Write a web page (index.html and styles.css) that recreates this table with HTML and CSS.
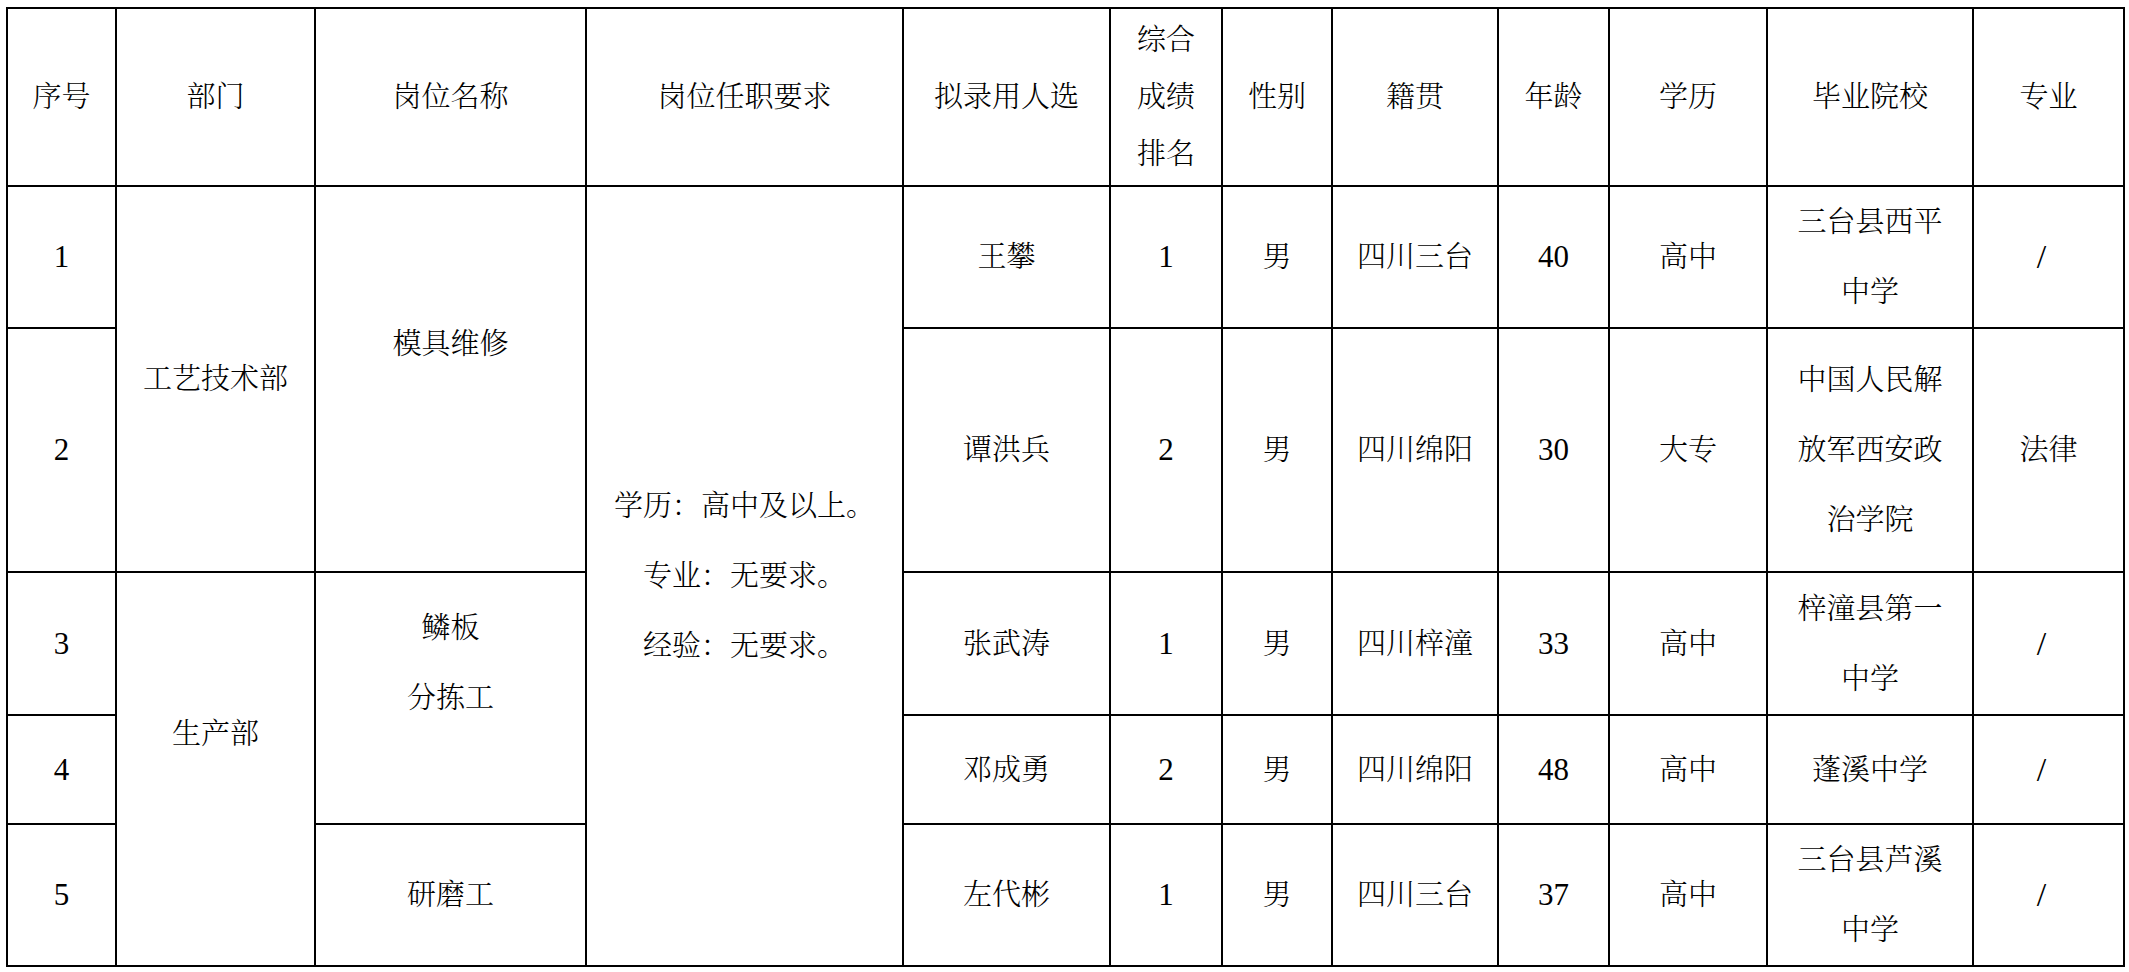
FILE: index.html
```html
<!DOCTYPE html>
<html lang="zh-CN">
<head>
<meta charset="utf-8">
<title>拟录用人员名单</title>
<link rel="stylesheet" href="styles.css">
</head>
<body>
<table class="roster">
  <colgroup>
    <col class="c1"><col class="c2"><col class="c3"><col class="c4"><col class="c5"><col class="c6">
    <col class="c7"><col class="c8"><col class="c9"><col class="c10"><col class="c11"><col class="c12">
  </colgroup>
  <tr class="r-head">
    <th>序号</th>
    <th>部门</th>
    <th>岗位名称</th>
    <th>岗位任职要求</th>
    <th>拟录用人选</th>
    <th class="stack"><div>综合</div><div>成绩</div><div>排名</div></th>
    <th>性别</th>
    <th>籍贯</th>
    <th>年龄</th>
    <th>学历</th>
    <th>毕业院校</th>
    <th>专业</th>
  </tr>
  <tr class="r1">
    <td class="num">1</td>
    <td rowspan="2">工艺技术部</td>
    <td rowspan="2"><p>模具维修</p><p class="blank"></p></td>
    <td rowspan="5"><p>学历：高中及以上。</p><p>专业：无要求。</p><p>经验：无要求。</p></td>
    <td>王攀</td>
    <td class="num">1</td>
    <td>男</td>
    <td>四川三台</td>
    <td class="num">40</td>
    <td>高中</td>
    <td><p>三台县西平</p><p>中学</p></td>
    <td class="slash">/</td>
  </tr>
  <tr class="r2">
    <td class="num">2</td>
    <td>谭洪兵</td>
    <td class="num">2</td>
    <td>男</td>
    <td>四川绵阳</td>
    <td class="num">30</td>
    <td>大专</td>
    <td><p>中国人民解</p><p>放军西安政</p><p>治学院</p></td>
    <td>法律</td>
  </tr>
  <tr class="r3">
    <td class="num">3</td>
    <td rowspan="3"><p>生产部</p><p class="blank"></p></td>
    <td rowspan="2"><p>鳞板</p><p>分拣工</p><p class="blank"></p></td>
    <td>张武涛</td>
    <td class="num">1</td>
    <td>男</td>
    <td>四川梓潼</td>
    <td class="num">33</td>
    <td>高中</td>
    <td><p>梓潼县第一</p><p>中学</p></td>
    <td class="slash">/</td>
  </tr>
  <tr class="r4">
    <td class="num">4</td>
    <td>邓成勇</td>
    <td class="num">2</td>
    <td>男</td>
    <td>四川绵阳</td>
    <td class="num">48</td>
    <td>高中</td>
    <td>蓬溪中学</td>
    <td class="slash">/</td>
  </tr>
  <tr class="r5">
    <td class="num">5</td>
    <td>研磨工</td>
    <td>左代彬</td>
    <td class="num">1</td>
    <td>男</td>
    <td>四川三台</td>
    <td class="num">37</td>
    <td>高中</td>
    <td><p>三台县芦溪</p><p>中学</p></td>
    <td class="slash">/</td>
  </tr>
</table>
</body>
</html>
```

FILE: styles.css
```css
html, body {
  background: #ffffff;
}
body {
  margin: 7px 0 0 6px;
  font-family: "Liberation Serif", "Noto Serif CJK SC", "Noto Sans CJK SC", serif;
  color: #000000;
}
.roster {
  border-collapse: collapse;
  table-layout: fixed;
  width: 2119px;
  font-size: 29px;
}
.c1 { width: 109px; }
.c2 { width: 199px; }
.c3 { width: 271px; }
.c4 { width: 317px; }
.c5 { width: 207px; }
.c6 { width: 112px; }
.c7 { width: 110px; }
.c8 { width: 166px; }
.c9 { width: 111px; }
.c10 { width: 158px; }
.c11 { width: 206px; }
.c12 { width: 151px; }

.roster th,
.roster td {
  border: 2px solid #000000;
  padding: 0;
  text-align: center;
  vertical-align: middle;
  font-weight: 300;
  line-height: 70px;
  overflow: hidden;
}
.roster th {
  line-height: 57px;
}
.roster p {
  margin: 0;
  height: 70px;
}
.stack div {
  height: 57px;
}
.r-head { height: 178px; }
.r1 { height: 141px; }
.r2 { height: 244px; }
.r3 { height: 143px; }
.r4 { height: 109px; }
.r5 { height: 142px; }
.roster .num {
  font-family: "Liberation Serif", serif;
  font-size: 31px;
  font-weight: 400;
}
.roster .slash {
  font-family: "Liberation Serif", serif;
  font-size: 34px;
  font-weight: 400;
  padding-right: 14px;
}
```
